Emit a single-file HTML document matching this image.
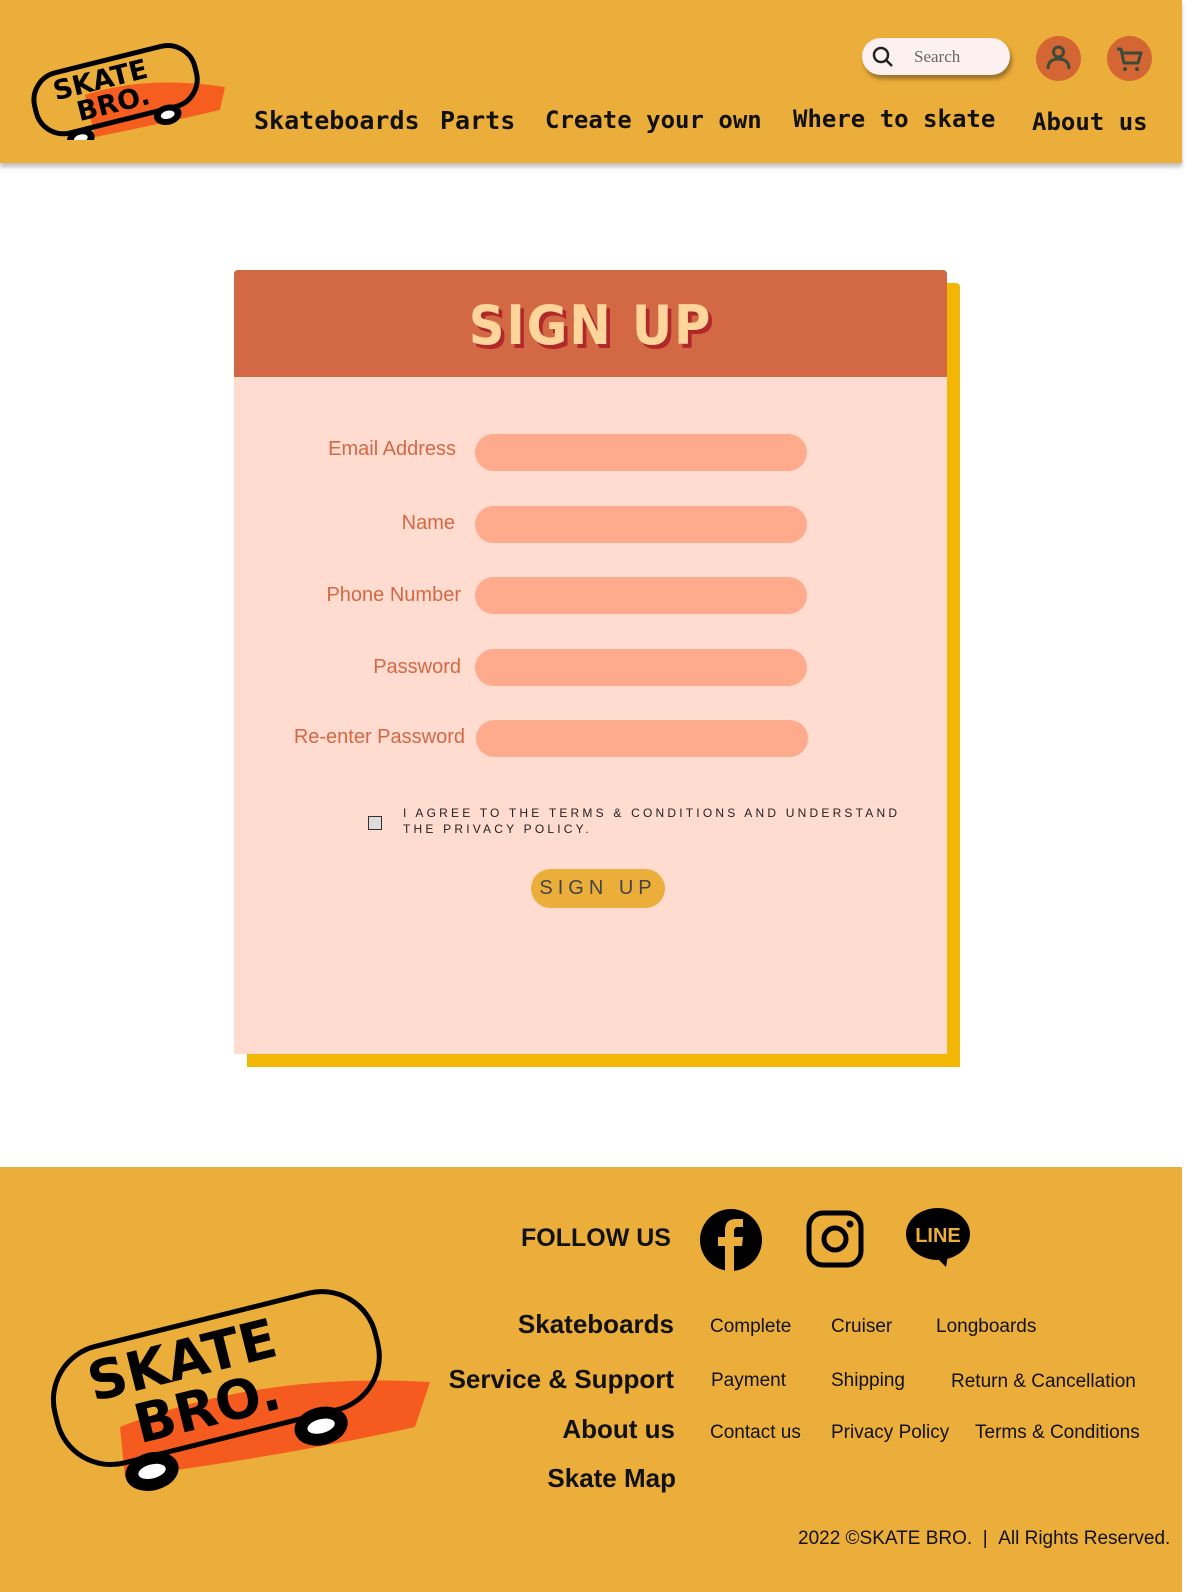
<!DOCTYPE html>
<html><head><meta charset="utf-8">
<style>
*{margin:0;padding:0;box-sizing:border-box}
body{width:1200px;height:1592px;background:#fff;font-family:"Liberation Sans",sans-serif;position:relative;overflow:hidden}
.hdr{position:absolute;left:0;top:0;width:1182px;height:163px;background:#ECAE3A;box-shadow:0 4px 4px rgba(0,0,0,.25)}
.nav{position:absolute;font-family:"DejaVu Sans Mono","Liberation Mono",monospace;font-weight:bold;font-size:25px;color:#111;white-space:nowrap}
.search{position:absolute;left:862px;top:38px;width:148px;height:37px;border-radius:19px;background:#FCF0F0;box-shadow:2px 4px 4px rgba(0,0,0,.35)}
.search span{position:absolute;left:52px;top:9px;font-family:"Liberation Serif",serif;font-size:17px;color:#666}
.circ{position:absolute;width:45px;height:45px;border-radius:50%;background:#D36633}
.card{position:absolute;left:234px;top:270px;width:713px;height:784px;background:#FFDBD0;border-radius:4px 4px 0 0;box-shadow:13px 13px 0 #F2B705}
.ch{height:107px;background:#D36944;border-radius:4px 4px 0 0;text-align:center}
.ch h1{font-family:"DejaVu Sans",sans-serif;font-weight:bold;font-size:54px;color:#FFD59B;letter-spacing:2px;line-height:112px;text-shadow:4px 4px 0 #B0282A;transform:scaleX(.92)}
.lbl{position:absolute;font-family:"Liberation Sans",sans-serif;font-size:20px;color:#D36944;text-align:right;white-space:nowrap}
.inp{position:absolute;left:241px;width:332px;height:37px;border-radius:19px;background:#FEAA8C}
.agree{position:absolute;left:169px;top:535px;font-size:12px;letter-spacing:3.2px;color:#222;line-height:16px}
.cb{position:absolute;left:134px;top:546px;width:14px;height:14px;border:1.5px solid #333;background:#ddd}
.btn{position:absolute;left:297px;top:599px;width:134px;height:39px;border-radius:20px;background:#ECAE3A;color:#444;font-size:20px;letter-spacing:5px;text-align:center;line-height:39px}
.ftr{position:absolute;left:0;top:1167px;width:1182px;height:425px;background:#ECAE3A}
.fh{position:absolute;font-family:"Liberation Sans",sans-serif;font-weight:bold;font-size:26px;color:#111;text-align:right;white-space:nowrap}
.fl{position:absolute;font-size:19px;color:#111;white-space:nowrap}
</style></head><body>
<div class="hdr">
<svg style="position:absolute;left:25px;top:25px" width="210" height="115" viewBox="0 0 210 115">
<path d="M60 70 Q120 50 200 62 L195 85 Q130 100 70 112 Z" fill="#F55A1E" opacity=".95"/>
<g transform="rotate(-14 85 65)">
<rect x="8" y="35" width="165" height="62" rx="28" fill="none" stroke="#000" stroke-width="5"/>
<text x="30" y="62" font-family="DejaVu Sans" font-weight="bold" font-size="27" fill="#000">SKATE</text>
<text x="48" y="88" font-family="DejaVu Sans" font-weight="bold" font-size="27" fill="#000">BRO.</text>
<ellipse cx="45" cy="105" rx="14" ry="10" fill="#000"/><ellipse cx="45" cy="105" rx="7" ry="4" fill="#fff"/>
<ellipse cx="135" cy="103" rx="14" ry="10" fill="#000"/><ellipse cx="135" cy="103" rx="7" ry="4" fill="#fff"/>
</g></svg>
<div class="nav" style="left:254px;top:106px">Skateboards</div>
<div class="nav" style="left:440px;top:106px">Parts</div>
<div class="nav" style="left:545px;top:106px;font-size:24px">Create your own</div>
<div class="nav" style="left:793px;top:105px;font-size:24px">Where to skate</div>
<div class="nav" style="left:1032px;top:108px;font-size:24px">About us</div>
<div class="search"><svg style="position:absolute;left:10px;top:8px" width="22" height="22" viewBox="0 0 22 22"><circle cx="9" cy="9" r="7" fill="none" stroke="#222" stroke-width="2.5"/><path d="M14 14 L20 20" stroke="#222" stroke-width="2.5"/></svg><span>Search</span></div>
<div class="circ" style="left:1036px;top:36px"><svg width="45" height="45" viewBox="0 0 45 45"><circle cx="22.5" cy="16" r="5" fill="none" stroke="#3d4a3a" stroke-width="3"/><path d="M12 33 Q12 23 22.5 23 Q33 23 33 33" fill="none" stroke="#3d4a3a" stroke-width="3"/></svg></div>
<div class="circ" style="left:1107px;top:36px"><svg width="45" height="45" viewBox="0 0 45 45"><path d="M10 13 L14 13 L17 27 L31 27 L34 17 L15 17" fill="none" stroke="#3d4a3a" stroke-width="3" stroke-linejoin="round"/><circle cx="18" cy="33" r="2" fill="#3d4a3a"/><circle cx="30" cy="33" r="2" fill="#3d4a3a"/></svg></div>
</div>

<div class="card">
<div class="ch"><h1>SIGN UP</h1></div>
<div class="lbl" style="right:491px;top:168px">Email Address</div><div class="inp" style="top:164px"></div>
<div class="lbl" style="right:492px;top:242px">Name</div><div class="inp" style="top:236px"></div>
<div class="lbl" style="right:486px;top:314px">Phone Number</div><div class="inp" style="top:307px"></div>
<div class="lbl" style="right:486px;top:386px">Password</div><div class="inp" style="top:379px"></div>
<div class="lbl" style="right:482px;top:456px">Re-enter Password</div><div class="inp" style="top:450px;left:242px"></div>
<div class="cb"></div>
<div class="agree">I AGREE TO THE TERMS &amp; CONDITIONS AND UNDERSTAND<br>THE PRIVACY POLICY.</div>
<div class="btn">SIGN UP</div>
</div>

<div class="ftr">
<svg style="position:absolute;left:30px;top:95px" width="410" height="230" viewBox="0 0 410 230">
<path d="M90 165 Q230 110 400 120 L385 165 Q250 195 95 215 Z" fill="#F55A1E"/>
<g transform="rotate(-14 190 110)">
<rect x="20" y="55" width="330" height="120" rx="55" fill="none" stroke="#000" stroke-width="5"/>
<text x="60" y="108" font-family="DejaVu Sans" font-weight="bold" font-size="54" fill="#000">SKATE</text>
<text x="95" y="160" font-family="DejaVu Sans" font-weight="bold" font-size="54" fill="#000">BRO.</text>
<ellipse cx="100" cy="190" rx="27" ry="19" fill="#000"/><ellipse cx="100" cy="190" rx="14" ry="7" fill="#fff"/>
<ellipse cx="275" cy="187" rx="27" ry="19" fill="#000"/><ellipse cx="275" cy="187" rx="14" ry="7" fill="#fff"/>
</g></svg>
<div class="fh" style="left:521px;top:57px;font-size:25px">FOLLOW US</div>
<svg style="position:absolute;left:699px;top:41px" width="64" height="64" viewBox="0 0 64 64"><circle cx="32" cy="32" r="31" fill="#000"/><path d="M35 64 V38 H43 L44 29 H35 V23 Q35 19 39 19 H44 V11 H37 Q26 11 26 22 V29 H19 V38 H26 V64 Z" fill="#ECAE3A"/></svg>
<svg style="position:absolute;left:806px;top:43px" width="58" height="58" viewBox="0 0 58 58"><rect x="3" y="3" width="52" height="52" rx="14" fill="none" stroke="#000" stroke-width="5"/><circle cx="29" cy="29" r="11" fill="none" stroke="#000" stroke-width="5"/><circle cx="44" cy="14" r="3.5" fill="#000"/></svg>
<svg style="position:absolute;left:906px;top:40px" width="64" height="62" viewBox="0 0 64 62"><ellipse cx="32" cy="27" rx="32" ry="26" fill="#000"/><path d="M30 50 L40 60 L42 48 Z" fill="#000"/><text x="32" y="35" text-anchor="middle" font-family="Liberation Sans" font-weight="bold" font-size="20" fill="#ECAE3A">LINE</text></svg>
<div class="fh" style="right:508px;top:142px">Skateboards</div>
<div class="fh" style="right:508px;top:197px">Service &amp; Support</div>
<div class="fh" style="right:507px;top:247px">About us</div>
<div class="fh" style="right:506px;top:296px">Skate Map</div>
<div class="fl" style="left:710px;top:149px">Complete</div>
<div class="fl" style="left:831px;top:149px">Cruiser</div>
<div class="fl" style="left:936px;top:149px">Longboards</div>
<div class="fl" style="left:711px;top:203px">Payment</div>
<div class="fl" style="left:831px;top:203px">Shipping</div>
<div class="fl" style="left:951px;top:204px">Return &amp; Cancellation</div>
<div class="fl" style="left:710px;top:255px">Contact us</div>
<div class="fl" style="left:831px;top:255px">Privacy Policy</div>
<div class="fl" style="left:975px;top:255px">Terms &amp; Conditions</div>
<div class="fl" style="left:798px;top:361px">2022 ©SKATE BRO. &nbsp;| &nbsp;All Rights Reserved.</div>
</div>
</body></html>
